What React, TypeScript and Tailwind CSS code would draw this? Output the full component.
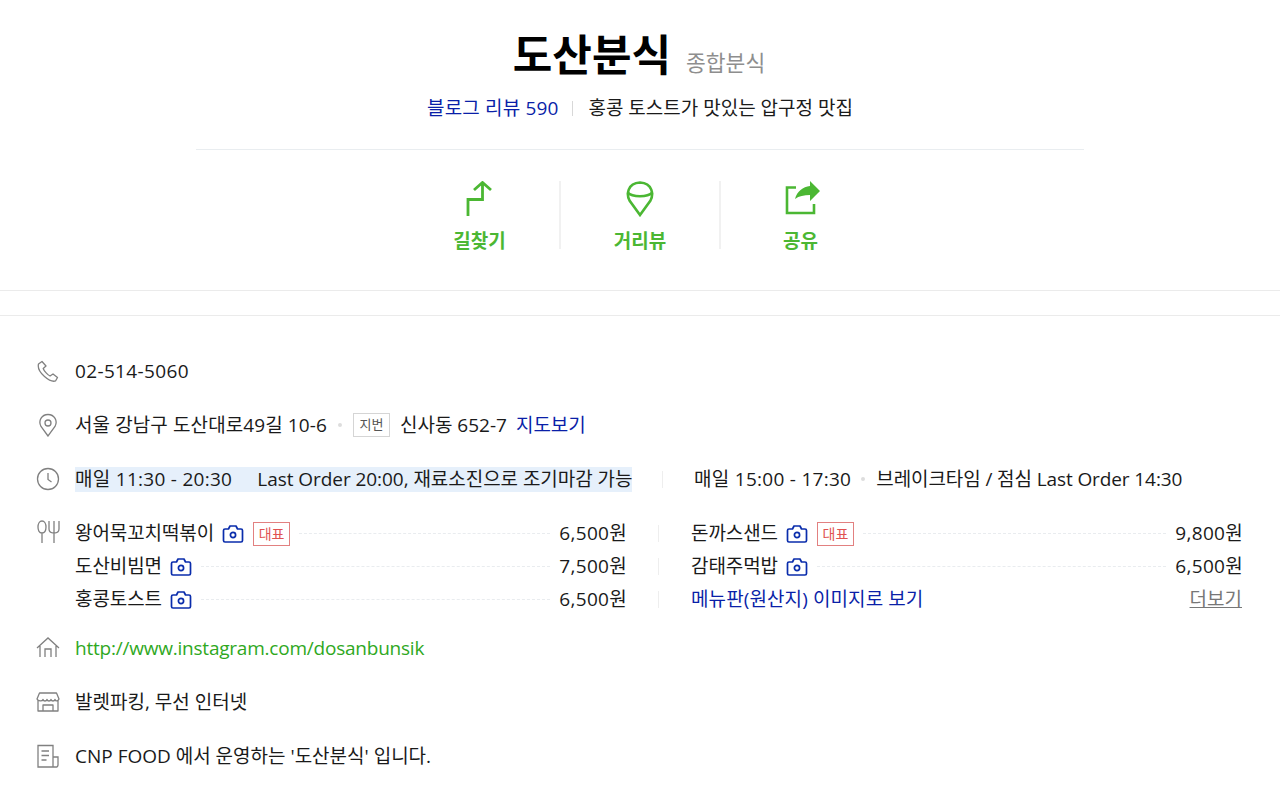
const Dots = () => <span className="flex-1 min-w-0 mx-[9px] border-t border-dashed border-[#e9ecef]" />

const Camera = () => (
  <svg width="22" height="20" viewBox="0 0 22 20" fill="none" stroke="#0a2dac" strokeWidth="1.7" className="ml-[8px] shrink-0">
    <path d="M1.500 6.500c0-.8.6-1.500 1.500-1.500h3.500l1.500-3h6l1.500 3H19c.9 0 1.500.7 1.500 1.500v10c0 .8-.6 1.500-1.500 1.500H3c-.9 0-1.500-.7-1.500-1.500z" strokeLinejoin="round" />
    <circle cx="11" cy="11" r="2.600" />
  </svg>
)

const Badge = () => (
  <span className="ml-[9px] shrink-0 w-[37px] h-[24px] border border-[#e28080] text-[#e05252] text-[14px] flex items-center justify-center">대표</span>
)

const Divider = () => <span className="w-px h-[17px] bg-[#eeeeee] shrink-0" />

function MenuItem({ name, price, rep }: { name: string; price: string; rep?: boolean }) {
  return (
    <div className="flex items-center flex-1 min-w-0 h-[33px]">
      <span className="tracking-[-0.1px]">{name}</span>
      <Camera />
      {rep && <Badge />}
      <Dots />
      <span className="tracking-[0.3px] -mr-[1px]">{price}</span>
    </div>
  )
}

function Row({ icon, children, className }: { icon: React.ReactNode; children: React.ReactNode; className?: string }) {
  return (
    <div className={`flex items-center h-[54px] ${className ?? ''}`}>
      <span className="w-[39px] shrink-0 flex">{icon}</span>
      {children}
    </div>
  )
}

const ic = { fill: 'none', stroke: '#808080', strokeWidth: 1.3, width: 24, height: 24, viewBox: '0 0 24 24' }

export default function App() {
  return (
    <div className="w-[1280px] h-[797px] overflow-hidden bg-white text-[#1a1a1a] text-[19px] font-['Open_Sans','Noto_Sans_CJK_KR',sans-serif]">
      {/* Header */}
      <header className="h-[291px] border-b border-[#ebebeb] pt-[29px] flex flex-col items-center">
        <div className="flex items-baseline h-[52px] mr-[2px]">
          <h1 className="text-[43px] leading-[52px] font-bold text-black">도산분식</h1>
          <span className="ml-[15px] text-[21.500px] text-[#8e8e8e]">종합분식</span>
        </div>
        <div className="flex items-center h-[28px] mt-[13px]">
          <a className="text-[#0a1fa8] tracking-[0.15px]">블로그 리뷰 590</a>
          <span className="w-px h-[15px] bg-[#d8d8d8] ml-[14px] mr-[15px]" />
          <span>홍콩 토스트가 맛있는 압구정 맛집</span>
        </div>
        <div className="w-[888px] border-t border-[#e9edf0] mt-[27px]" />
        <div className="flex mt-[31px] h-[68px]">
          <div className="w-[159px] flex flex-col items-center">
            <svg width="30" height="36" viewBox="0 0 30 36" fill="none" stroke="#4bb733" strokeWidth="2.800" className="shrink-0">
              <path d="M3 35V18.500h14.500V2M9 9l8.500-7.500L26 9" />
            </svg>
            <span className="text-[19px] font-bold text-[#4bb733] mt-[16px] leading-[16px]">길찾기</span>
          </div>
          <div className="w-[160px] flex flex-col items-center border-l-2 border-[#f1f1f1]">
            <svg width="30" height="36" viewBox="0 0 30 36" fill="none" stroke="#4bb733" strokeWidth="2.600" className="shrink-0">
              <path d="M15 34L4.500 19.500C1.500 14 2 2 15 1.500 28 2 28.500 14 25.500 19.500z" />
              <path d="M2.500 11.500c5 5 20 5 25 0" />
            </svg>
            <span className="text-[19px] font-bold text-[#4bb733] mt-[16px] leading-[16px]">거리뷰</span>
          </div>
          <div className="w-[161px] flex flex-col items-center border-l-2 border-[#f1f1f1]">
            <svg width="38" height="36" viewBox="0 0 38 36" fill="none" className="shrink-0">
              <path d="M14 6.500H5v25.500h27v-9" stroke="#4bb733" strokeWidth="2.600" />
              <path d="M28 0l10 10-10 10v-6c-6 0-11 1-15 4 2-8 8-12 15-13z" fill="#4bb733" />
            </svg>
            <span className="text-[19px] font-bold text-[#4bb733] mt-[16px] leading-[16px]">공유</span>
          </div>
        </div>
      </header>

      {/* Detail */}
      <section className="mt-[24px] border-t border-[#ebebeb] pt-[28px] pl-[36px] pr-[38px]">
        <Row icon={<svg {...ic}><path d="M6 2.500L2.500 5c-1 4 2 9 6 12.500s8 5.500 11 4.500l2-3.500-4.500-3.500-3 2c-2-.8-6-5-6.800-7.500L10 7z" strokeLinejoin="round" /></svg>}>
          <span className="tracking-[0.35px]">02-514-5060</span>
        </Row>
        <Row icon={<svg {...ic}><path d="M12 23L5 13.500C2 8 5.500 1.500 12 1.500S22 8 19 13.500z" /><circle cx="12" cy="10" r="3" /></svg>}>
          <span className="tracking-[0.1px]">서울 강남구 도산대로49길 10-6</span>
          <span className="w-[4px] h-[4px] rounded-full bg-[#dddddd] ml-[11px] mr-[11px]" />
          <span className="w-[37px] h-[24px] border border-[#d5d5d5] text-[13px] text-[#555] flex items-center justify-center mr-[10px]">지번</span>
          <span>신사동 652-7</span>
          <a className="ml-[9px] text-[#0a1fa8]">지도보기</a>
        </Row>
        <Row icon={<svg {...ic}><circle cx="12" cy="12" r="10.500" /><path d="M12 6v6.500l3.500 2.500" /></svg>}>
          <div className="bg-[#e6f0fb] h-[25px] leading-[25px] w-[557px] shrink-0 flex whitespace-nowrap">
            <span className="tracking-[0.28px]">매일 11:30 - 20:30</span>
            <span className="ml-[25px] tracking-[-0.05px]">Last Order 20:00, 재료소진으로 조기마감 가능</span>
          </div>
          <span className="w-px h-[17px] bg-[#eeeeee] ml-[30px] mr-[31px]" />
          <span className="tracking-[0.28px]">매일 15:00 - 17:30</span>
          <span className="w-[4px] h-[4px] rounded-full bg-[#dddddd] ml-[10px] mr-[11px]" />
          <span className="tracking-[-0.1px]">브레이크타임 / 점심 Last Order 14:30</span>
        </Row>

        <div className="flex pt-[11px] -mb-[1px]">
          <span className="w-[39px] shrink-0 flex pt-[3px]">
            <svg {...ic}><path d="M6 23V13M6 13c-3 0-4-3-4-6s1.500-6 4-6 4 3 4 6-1 6-4 6zM18 23V13M13 1v8c0 2.500 2 4 5 4s5-1.500 5-4V1M18 1v12" /></svg>
          </span>
          <div className="flex-1 min-w-0">
            <div className="flex items-center">
              <MenuItem name="왕어묵꼬치떡볶이" price="6,500원" rep />
              <span className="w-[65px] flex justify-center"><Divider /></span>
              <MenuItem name="돈까스샌드" price="9,800원" rep />
            </div>
            <div className="flex items-center">
              <MenuItem name="도산비빔면" price="7,500원" />
              <span className="w-[65px] flex justify-center"><Divider /></span>
              <MenuItem name="감태주먹밥" price="6,500원" />
            </div>
            <div className="flex items-center">
              <MenuItem name="홍콩토스트" price="6,500원" />
              <span className="w-[65px] flex justify-center"><Divider /></span>
              <div className="flex items-center justify-between flex-1 min-w-0 h-[33px]">
                <a className="text-[#0a1fa8] tracking-[0.1px]">메뉴판(원산지) 이미지로 보기</a>
                <a className="text-[#777] underline">더보기</a>
              </div>
            </div>
          </div>
        </div>

        <Row className="mt-[6px]" icon={<svg {...ic}><path d="M1 12L12 2l11 10M4 10v11M20 10v11M9 21v-8h6v8" /></svg>}>
          <a className="text-[#2fa81e] tracking-[-0.22px]">http://www.instagram.com/dosanbunsik</a>
        </Row>
        <Row icon={<svg {...ic}><path d="M2 10v11h20V10M3.500 3h17L23 9c-1 2.500-3.500 2.500-4 .5-.5 2-3.500 2-4 0-.5 2-3.500 2-4 0-.5 2-3.500 2-4 0C6.500 11.500 2 11.500 1 9zM7 21v-6h10v6" strokeLinejoin="round" /></svg>}>
          <span>발렛파킹, 무선 인터넷</span>
        </Row>
        <Row icon={<svg {...ic}><path d="M2 1.500h15V23H2zM17 13h5v8a2 2 0 0 1-2.500 2H16M5.500 7H13M5.500 11.500H13M5.500 16h5" /></svg>}>
          <span>CNP FOOD 에서 운영하는 '도산분식' 입니다.</span>
        </Row>
      </section>
    </div>
  )
}
